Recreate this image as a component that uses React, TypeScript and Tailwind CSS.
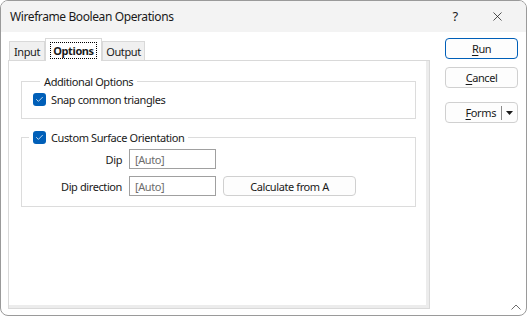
import { Check, X } from 'lucide-react';

const font = { fontFamily: '"Noto Sans", "Segoe UI", sans-serif' };

function CheckBox() {
  return (
    <span className="flex h-[13px] w-[13px] items-center justify-center rounded-[3px] bg-[#005fb8]">
      <Check className="h-[9px] w-[9px] text-white" strokeWidth={2} />
    </span>
  );
}

function Field({ label }: { label: string }) {
  return (
    <div className="flex items-center">
      <span className="w-[107px] pr-[7px] text-right">{label}</span>
      <div className="flex h-[20px] w-[87px] items-center border border-[#a0a0a0] px-[5px] text-[#6d6d6d]">[Auto]</div>
    </div>
  );
}

export default function App() {
  return (
    <div className="h-[316px] w-[527px] bg-white text-[11px] leading-none tracking-[-0.4px] text-[#1a1a1a]" style={font}>
      <div className="flex h-full flex-col overflow-hidden rounded-[8px] border border-[#9a9a9a]">
        {/* title bar */}
        <div className="flex h-[31px] shrink-0 items-center bg-[#f3f3f3] pl-[9px] text-[12px]">
          <span className="flex-1">Wireframe Boolean Operations</span>
          <span className="w-[42px] text-center text-[13px]">?</span>
          <span className="mr-[8px] flex w-[42px] justify-center">
            <X className="h-[15px] w-[15px]" strokeWidth={1.2} />
          </span>
        </div>

        {/* body */}
        <div className="relative flex flex-1 pl-[7px] pr-[8px] pt-[6px]">
          <div className="flex w-[423px] flex-col">
            {/* tabs */}
            <div className="flex h-[22px] items-end pl-[1px]">
              <div className="flex h-[19px] w-[36px] items-center justify-center border border-b-0 border-[#d9d9d9] bg-[#f0f0f0]">Input</div>
              <div className="relative z-10 -mb-px flex h-[23px] w-[57px] items-center justify-center border border-b-0 border-[#d9d9d9] bg-white">
                <span className="border border-dotted border-black px-[2px] py-[2px] font-bold">Options</span>
              </div>
              <div className="flex h-[19px] w-[43px] items-center justify-center border border-b-0 border-[#d9d9d9] bg-[#f0f0f0]">Output</div>
            </div>

            {/* tab page */}
            <div className="mb-[6px] flex flex-1 border border-[#d9d9d9] bg-white">
              <div className="flex flex-1 flex-col gap-[12px] border-b-[3px] border-r-[3px] border-b-[#ececec] border-r-[#ececec] pl-[12px] pr-[10px] pt-[15px]">
                <fieldset className="h-[43px] border border-[#dcdcdc] pl-[11px]">
                  <legend className="ml-[7px] px-[4px]">Additional Options</legend>
                  <label className="mt-[6px] flex items-center gap-[5px]">
                    <CheckBox />
                    <span>Snap common triangles</span>
                  </label>
                </fieldset>

                <fieldset className="h-[76px] border border-[#dcdcdc]">
                  <legend className="ml-[7px] flex items-center gap-[5px] px-[4px]">
                    <CheckBox />
                    <span>Custom Surface Orientation</span>
                  </legend>
                  <div className="mt-[5px] flex flex-col gap-[7px]">
                    <Field label="Dip" />
                    <div className="flex items-center gap-[7px]">
                      <Field label="Dip direction" />
                      <div className="flex h-[20px] w-[133px] items-center justify-center rounded-[4px] border border-[#d0d0d0] bg-[#fdfdfd]">Calculate from A</div>
                    </div>
                  </div>
                </fieldset>
              </div>
            </div>
          </div>

          {/* buttons */}
          <div className="ml-[15px] flex w-[73px] flex-col">
            <div className="flex h-[21px] items-center justify-center rounded-[4px] border border-[#005fb8] bg-[#fdfdfd]">
              <span><span className="underline underline-offset-2">R</span>un</span>
            </div>
            <div className="mt-[8px] flex h-[21px] items-center justify-center rounded-[4px] border border-[#d0d0d0] bg-[#fdfdfd]">
              <span><span className="underline underline-offset-2">C</span>ancel</span>
            </div>
            <div className="mt-[14px] flex h-[21px] items-center rounded-[4px] border border-[#d0d0d0] bg-[#fdfdfd]">
              <span className="flex-1 pr-[5px] text-right"><span className="underline underline-offset-2">F</span>orms</span>
              <span className="h-[14px] w-px bg-[#8a8a8a]" />
              <span className="flex w-[15px] justify-center">
                <svg width="7" height="4" viewBox="0 0 7 4"><path d="M0 0h7L3.5 4z" fill="#1a1a1a" /></svg>
              </span>
            </div>
          </div>

          {/* resize grip */}
          <svg className="absolute bottom-[5px] right-[5px]" width="10" height="6" viewBox="0 0 10 6">
            <path d="M0.5 5.5L5 1l4.5 4.5" fill="none" stroke="#6d6d6d" strokeWidth="1" />
          </svg>
        </div>
      </div>
    </div>
  );
}
